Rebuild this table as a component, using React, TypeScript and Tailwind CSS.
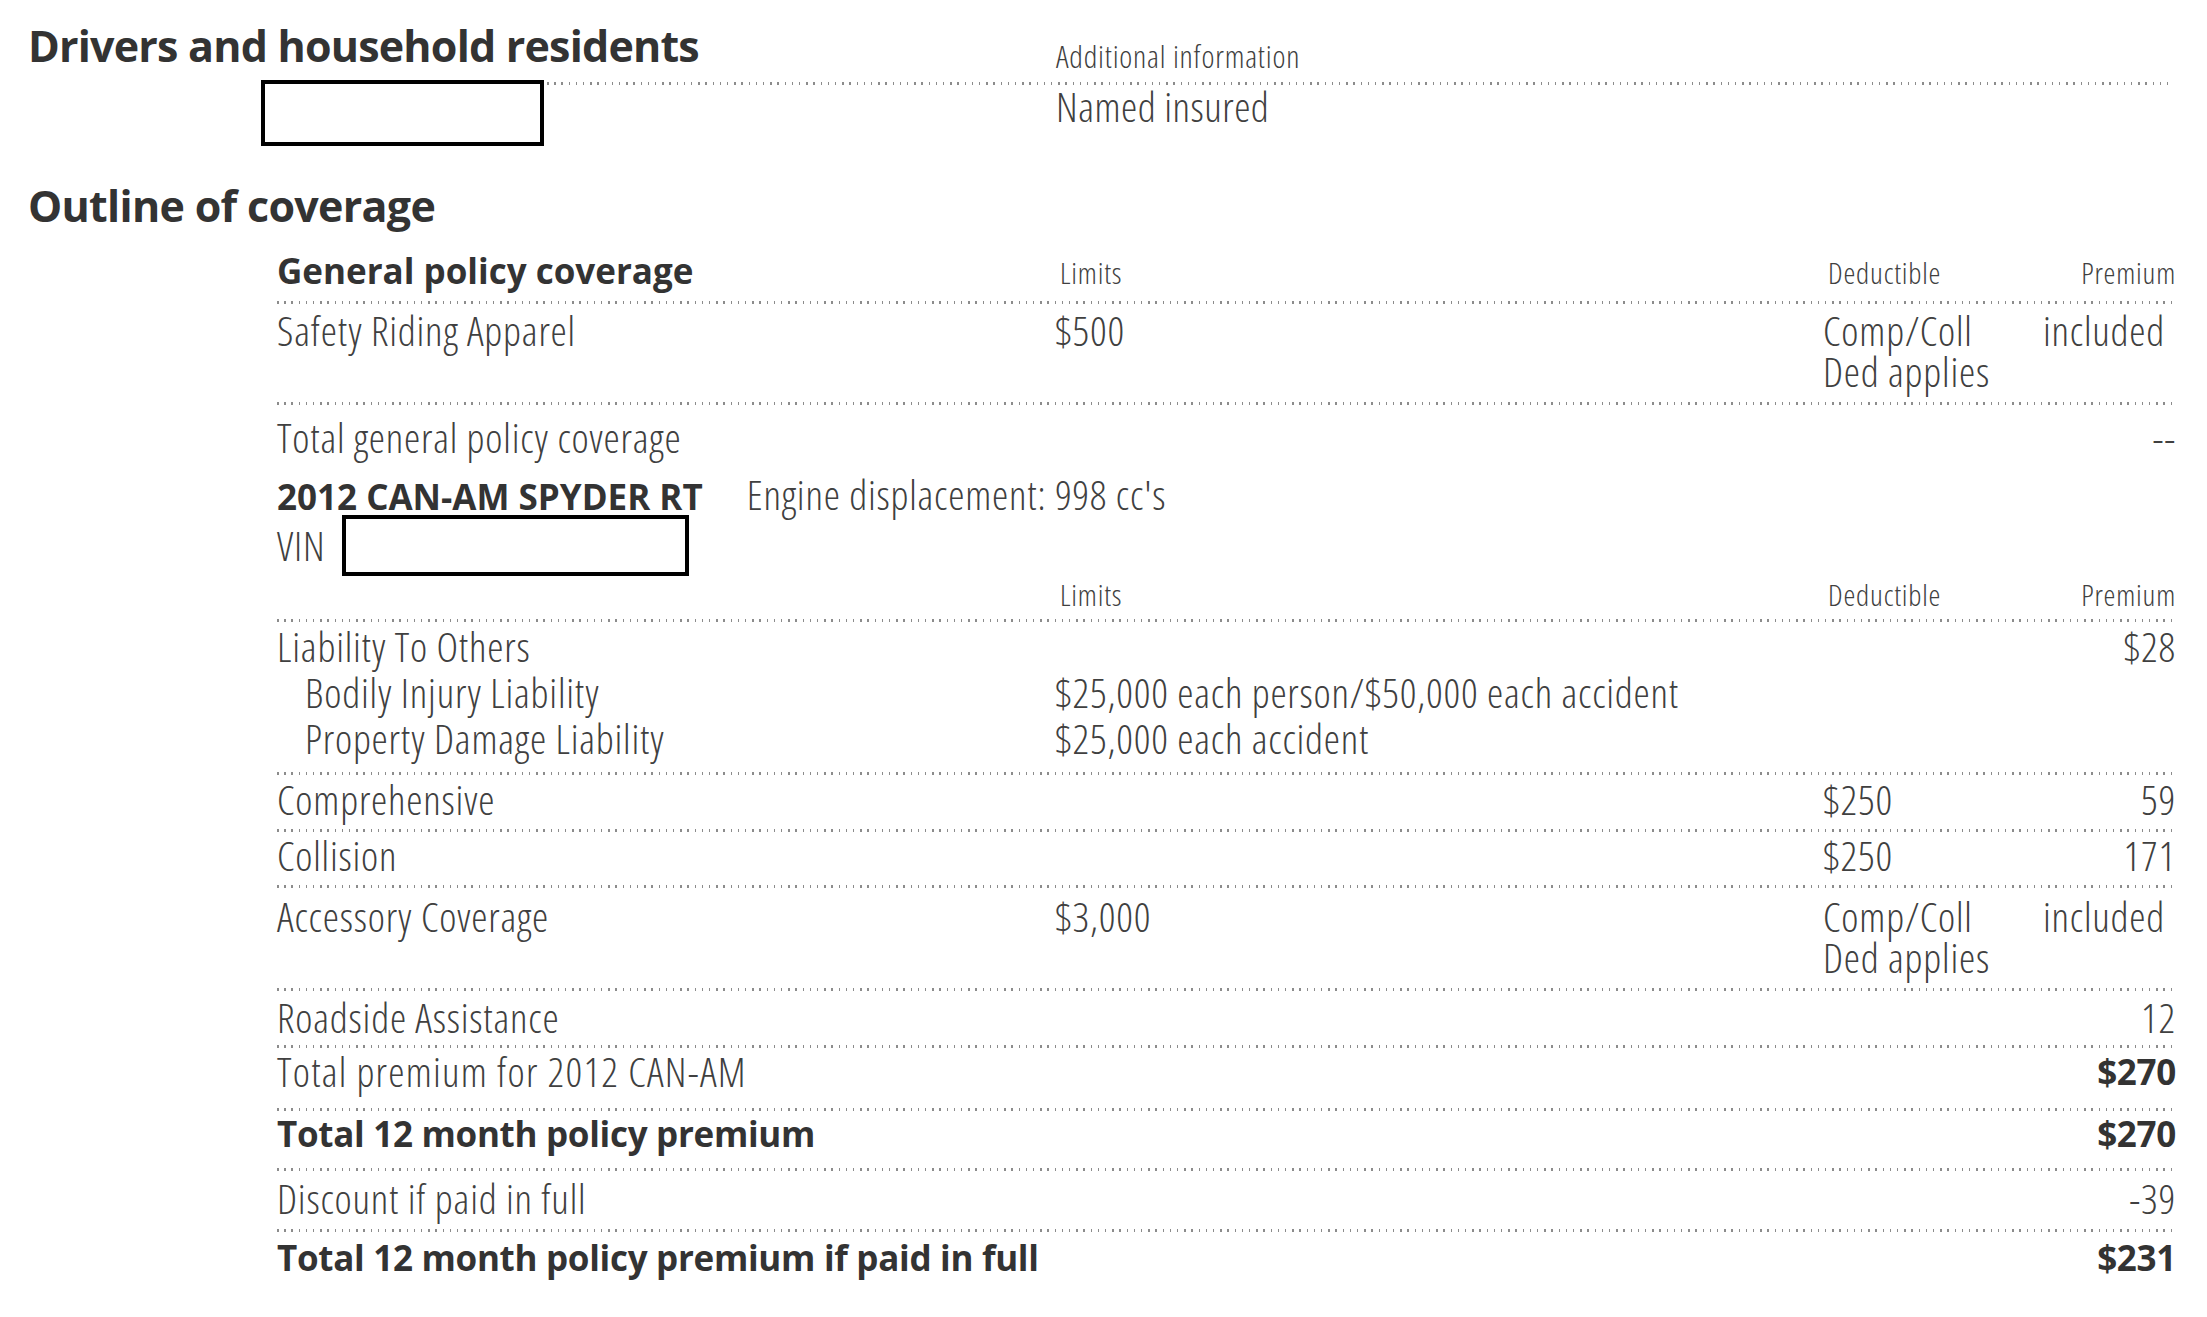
import React from "react";

const F = "font-['Open_Sans',sans-serif]";
const BODY = "text-[41px] leading-[41px] font-light text-[#404040] [font-stretch:75%] tracking-[0.8px]";
const SMALL = "text-[30px] leading-[30px] font-light text-[#404040] [font-stretch:75%] tracking-[0.8px]";
const BOLD = "text-[35px] leading-[41px] font-bold text-[#333333] [font-stretch:100%]";
const BOLDL = "text-[35px] leading-[41px] font-bold text-[#333333] [font-stretch:97%] tracking-[-0.3px]";
const H1 = "text-[43px] leading-[50px] font-bold text-[#333333] [font-stretch:93%]";
const GRID = "grid grid-cols-[778px_768px_1fr_160px]";

function Dots({ className = "" }: { className?: string }) {
  return (
    <div
      className={`h-[3px] bg-[repeating-linear-gradient(to_right,#8c8c8c_0px,#8c8c8c_1.5px,transparent_1.5px,transparent_7.2px)] ${className}`}
    />
  );
}

export default function App() {
  return (
    <div className={`${F} w-[2207px] h-[1317px] bg-white overflow-hidden relative`}>
      {/* Drivers header */}
      <div className="flex h-[80px] items-end">
        <div className={`${H1} tracking-[-0.8px] w-[1056px] pl-[28px] self-start pt-[21px]`}>
          Drivers and household residents
        </div>
        <div className="text-[31px] leading-[30px] font-light text-[#404040] [font-stretch:75%] tracking-[0.8px] pb-[9px]">
          Additional information
        </div>
      </div>
      <div className="flex h-[100px]">
        <div className="ml-[261px] w-[283px] h-[66px] border-4 border-black" />
        <div className="flex-1 mr-[33px] pl-[3px]">
          <Dots className="mt-[2px]" />
          <div className="pl-[509px] text-[41px] leading-[42px] font-light text-[#404040] [font-stretch:75%] tracking-[0.5px]">
            Named insured
          </div>
        </div>
      </div>

      {/* Outline */}
      <div className={`${H1} tracking-[-0.7px] pl-[28px] h-[50px] pt-[1px]`}>Outline of coverage</div>

      {/* table */}
      <div className="ml-[277px] w-[1899px]">
        <div className={`${GRID} items-baseline h-[71px] pt-[20px]`}>
          <div className={`${BOLD} whitespace-nowrap`}>General policy coverage</div>
          <div className={`${SMALL} pl-[5px]`}>Limits</div>
          <div className={`${SMALL} pl-[5px]`}>Deductible</div>
          <div className={`${SMALL} text-right`}>Premium</div>
        </div>
        <Dots />
        <div className={`${GRID} ${BODY} h-[98px] pt-[6px]`}>
          <div>Safety Riding Apparel</div>
          <div>$500</div>
          <div className="whitespace-nowrap">
            <div>Comp/Coll</div>
            <div>Ded applies</div>
          </div>
          <div className="text-right pr-[11px]">included</div>
        </div>
        <Dots />
        <div className={`${GRID} ${BODY} h-[53px] pt-[12px]`}>
          <div className="whitespace-nowrap">Total general policy coverage</div>
          <div />
          <div />
          <div className="text-right">--</div>
        </div>
        <div className="flex items-baseline mt-[16px] h-[41px]">
          <div className={`${BOLD} whitespace-nowrap`}>2012 CAN-AM SPYDER RT</div>
          <div className={`${BODY} ml-[44px] whitespace-nowrap`}>Engine displacement: 998 cc's</div>
        </div>
        <div className="flex items-center h-[61px]">
          <div className={BODY}>VIN</div>
          <div className="ml-[17px] w-[347px] h-[61px] border-4 border-black" />
        </div>
        <div className={`${GRID} items-baseline h-[43px] pt-[4px]`}>
          <div />
          <div className={`${SMALL} pl-[5px]`}>Limits</div>
          <div className={`${SMALL} pl-[5px]`}>Deductible</div>
          <div className={`${SMALL} text-right`}>Premium</div>
        </div>
        <Dots />
        <div className={`${GRID} text-[41px] leading-[46px] font-light text-[#404040] [font-stretch:75%] tracking-[0.8px] h-[150px] pt-[1px]`}>
          <div>
            <div>Liability To Others</div>
            <div className="pl-[28px]">Bodily Injury Liability</div>
            <div className="pl-[28px]">Property Damage Liability</div>
          </div>
          <div>
            <div>&nbsp;</div>
            <div className="whitespace-nowrap">$25,000 each person/$50,000 each accident</div>
            <div>$25,000 each accident</div>
          </div>
          <div />
          <div className="text-right">$28</div>
        </div>
        <Dots />
        <div className={`${GRID} ${BODY} h-[54px] pt-[4px]`}>
          <div>Comprehensive</div>
          <div />
          <div>$250</div>
          <div className="text-right">59</div>
        </div>
        <Dots />
        <div className={`${GRID} ${BODY} h-[53px] pt-[3px]`}>
          <div>Collision</div>
          <div />
          <div>$250</div>
          <div className="text-right">171</div>
        </div>
        <Dots />
        <div className={`${GRID} ${BODY} h-[100px] pt-[8px]`}>
          <div>Accessory Coverage</div>
          <div>$3,000</div>
          <div className="whitespace-nowrap">
            <div>Comp/Coll</div>
            <div>Ded applies</div>
          </div>
          <div className="text-right pr-[11px]">included</div>
        </div>
        <Dots />
        <div className={`${GRID} ${BODY} h-[54px] pt-[6px]`}>
          <div>Roadside Assistance</div>
          <div />
          <div />
          <div className="text-right">12</div>
        </div>
        <Dots />
        <div className={`${GRID} ${BODY} h-[60px] pt-[3px]`}>
          <div className="whitespace-nowrap tracking-[1.25px]">Total premium for 2012 CAN-AM</div>
          <div />
          <div />
          <div className={`${BOLDL} text-right`}>$270</div>
        </div>
        <Dots />
        <div className={`${GRID} h-[57px] pt-[2px]`}>
          <div className={`${BOLDL} whitespace-nowrap`}>Total 12 month policy premium</div>
          <div />
          <div />
          <div className={`${BOLDL} text-right`}>$270</div>
        </div>
        <Dots />
        <div className={`${GRID} ${BODY} h-[58px] pt-[7px]`}>
          <div>Discount if paid in full</div>
          <div />
          <div />
          <div className="text-right">-39</div>
        </div>
        <Dots />
        <div className={`${GRID} h-[60px] pt-[5px]`}>
          <div className={`${BOLDL} whitespace-nowrap`}>Total 12 month policy premium if paid in full</div>
          <div />
          <div />
          <div className={`${BOLDL} text-right`}>$231</div>
        </div>
      </div>
    </div>
  );
}
